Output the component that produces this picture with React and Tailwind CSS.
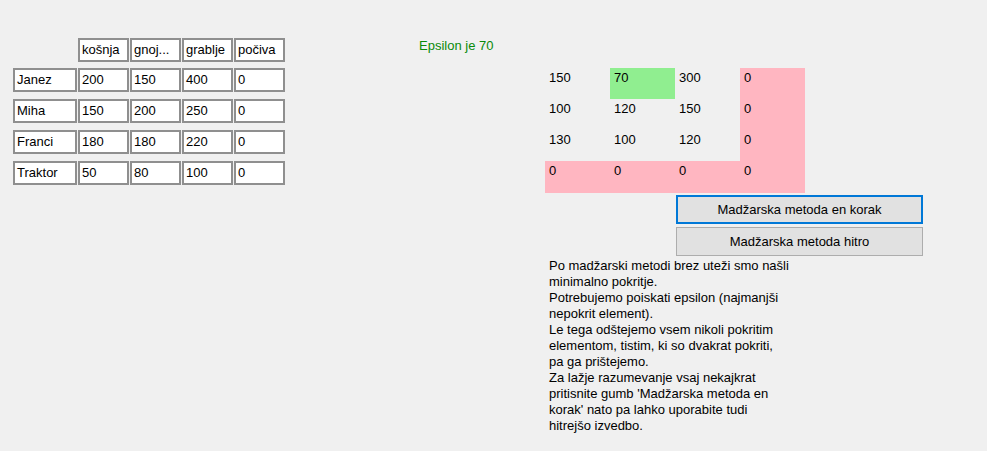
import React from 'react';

const glava = ['košnja', 'gnoj...', 'grablje', 'počiva'];

const vrstice = [
  ['Janez', '200', '150', '400', '0'],
  ['Miha', '150', '200', '250', '0'],
  ['Franci', '180', '180', '220', '0'],
  ['Traktor', '50', '80', '100', '0'],
];

const matrika = [
  ['150', '70', '300', '0'],
  ['100', '120', '150', '0'],
  ['130', '100', '120', '0'],
  ['0', '0', '0', '0'],
];

const opis = [
  'Po madžarski metodi brez uteži smo našli',
  'minimalno pokritje.',
  'Potrebujemo poiskati epsilon (najmanjši',
  'nepokrit element).',
  'Le tega odštejemo vsem nikoli pokritim',
  'elementom, tistim, ki so dvakrat pokriti,',
  'pa ga prištejemo.',
  'Za lažje razumevanje vsaj nekajkrat',
  "pritisnite gumb 'Madžarska metoda en",
  "korak' nato pa lahko uporabite tudi",
  'hitrejšo izvedbo.',
];

const Polje = ({ children, sirina }) => (
  <div className={`${sirina} h-[24px] border-2 border-[#8f8f8f] bg-white pl-[2px] leading-[20px] whitespace-nowrap overflow-hidden`}>
    {children}
  </div>
);

// barva celice: zelena za epsilon, roza za pokrite vrstice/stolpce
const barvaCelice = (i, j) => {
  if (i === 0 && j === 1) return 'bg-[#90ee90]';
  if (j === 3 || i === 3) return 'bg-[#ffb6c1]';
  return '';
};

export default function App() {
  return (
    <div className="w-[987px] h-[451px] bg-[#f0f0f0] flex text-[13px] text-black font-['Liberation_Sans',Arial,sans-serif] overflow-hidden">
      {/* Tabela vnosov */}
      <div className="w-[419px] pl-[13px] pt-[38px] flex flex-col">
        <div className="flex gap-[1px] pl-[65px]">
          {glava.map((g) => (
            <Polje key={g} sirina="w-[51px]">{g}</Polje>
          ))}
        </div>
        <div className="flex flex-col gap-[7px] mt-[6px]">
          {vrstice.map((v) => (
            <div key={v[0]} className="flex gap-[1px]">
              <Polje sirina="w-[64px]">{v[0]}</Polje>
              {v.slice(1).map((x, k) => (
                <Polje key={k} sirina="w-[51px]">{x}</Polje>
              ))}
            </div>
          ))}
        </div>
      </div>

      {/* Epsilon */}
      <div className="w-[126px] pt-[38px] leading-[16px] text-[#0a8a0a]">Epsilon je 70</div>

      {/* Matrika, gumbi in opis */}
      <div className="pt-[68px] flex flex-col">
        <div className="grid grid-cols-[repeat(4,65px)] w-[260px]">
          {matrika.map((vr, i) =>
            vr.map((x, j) => (
              <div
                key={`${i}-${j}`}
                className={`${i === 3 ? 'h-[32px]' : 'h-[31px]'} pl-[4px] pt-[2px] leading-[16px] ${barvaCelice(i, j)}`}
              >
                {x}
              </div>
            ))
          )}
        </div>

        <button className="ml-[131px] mt-[2px] w-[247px] h-[29px] border-2 border-[#0078d7] bg-[#e1e1e1] text-center leading-[16px]">
          Madžarska metoda en korak
        </button>
        <button className="ml-[131px] mt-[3px] w-[247px] h-[29px] border border-[#adadad] bg-[#e1e1e1] text-center leading-[16px]">
          Madžarska metoda hitro
        </button>

        <div className="mt-[2px] pl-[4px] leading-[16px]">
          {opis.map((l, i) => (
            <div key={i} className="whitespace-nowrap">{l}</div>
          ))}
        </div>
      </div>
    </div>
  );
}
